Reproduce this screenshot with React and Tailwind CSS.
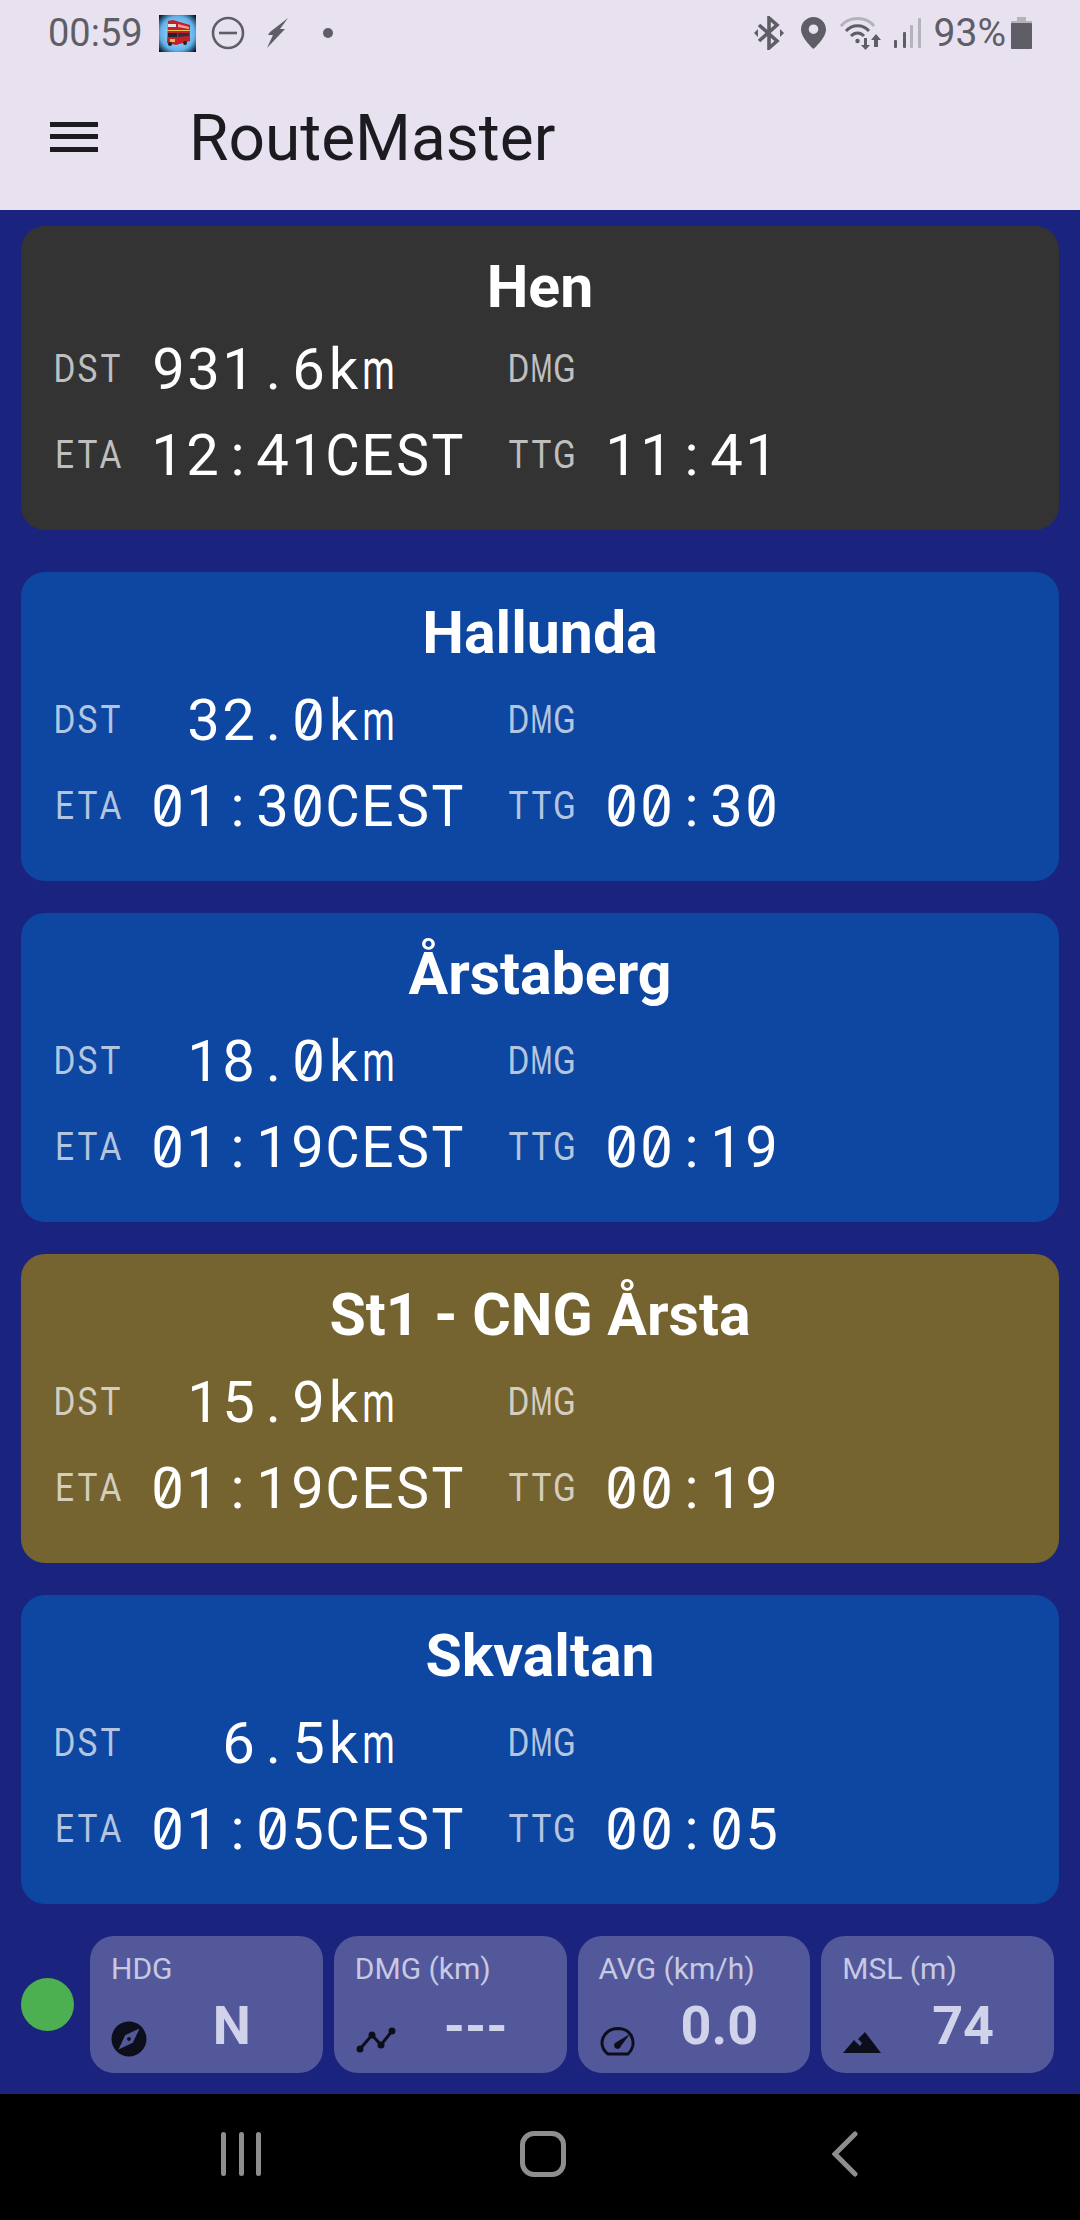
import React from 'react'

const roboto = "font-['Roboto',sans-serif]"

const stops = [
  { name: 'Hen', dst: '931.6km', eta: '12:41CEST', ttg: '11:41', bg: 'bg-[#333333]', first: true },
  { name: 'Hallunda', dst: '32.0km', eta: '01:30CEST', ttg: '00:30', bg: 'bg-[#0d47a1]' },
  { name: 'Årstaberg', dst: '18.0km', eta: '01:19CEST', ttg: '00:19', bg: 'bg-[#0d47a1]' },
  { name: 'St1 - CNG Årsta', dst: '15.9km', eta: '01:19CEST', ttg: '00:19', bg: 'bg-[#756330]' },
  { name: 'Skvaltan', dst: '6.5km', eta: '01:05CEST', ttg: '00:05', bg: 'bg-[#0d47a1]' },
]

// no Roboto Mono on the box, so each char sits in a fixed width cell
const labelScale = { M: 'scale-x-[.66]' }
const valueScale = {
  m: 'scale-x-[.64]',
  C: 'scale-x-[.9]',
  S: 'scale-x-[.95]',
  T: 'scale-x-[.92]',
  E: 'scale-x-[.98]',
}

const Label = ({ children }) => (
  <span className={`${roboto} -ml-[1px] text-[38px] leading-none text-white/70`}>
    {children.split('').map((c, i) => (
      <span key={i} className={`inline-flex w-[23px] justify-center ${labelScale[c] || 'scale-x-[.88]'}`}>{c}</span>
    ))}
  </span>
)

const Value = ({ children, className = '' }) => (
  <span className={`${roboto} -ml-[1px] text-[58px] leading-none text-white ${className}`}>
    {children.split('').map((c, i) => (
      <span
        key={i}
        className={`relative inline-flex w-[35px] justify-center ${valueScale[c] || ''} ${c === '0' ? "after:absolute after:left-[16px] after:top-[13px] after:h-[30px] after:w-[3.500px] after:rotate-[25deg] after:bg-white after:content-['']" : ''}`}
      >
        {c}
      </span>
    ))}
  </span>
)

const StopCard = ({ stop }) => (
  <div className={`${stop.bg} rounded-[24px] px-[33px] pt-[22px] ${stop.first ? 'mb-[42px]' : 'mb-[32px] last:mb-0'}`}>
    <div className={`${roboto} h-[78px] flex items-center justify-center text-[59px] font-bold text-white ${stop.first ? '' : 'mb-[5px]'}`}>
      {stop.name}
    </div>
    <div className="grid grid-cols-[97px_357px_97px_1fr] grid-rows-[86px_86px] items-center pb-[32px]">
      <Label>DST</Label>
      <Value className="pr-[112px] text-right">{stop.dst}</Value>
      <Label>DMG</Label>
      <span />
      <Label>ETA</Label>
      <Value>{stop.eta}</Value>
      <Label>TTG</Label>
      <Value>{stop.ttg}</Value>
    </div>
  </div>
)

const Bus = () => (
  <svg width="37" height="37" viewBox="0 0 37 37" className="ml-[16px]">
    <defs>
      <radialGradient id="glow" cx="50%" cy="50%" r="68%">
        <stop offset="0%" stopColor="#cfeafc" />
        <stop offset="68%" stopColor="#5fb0ea" />
        <stop offset="100%" stopColor="#04101f" />
      </radialGradient>
    </defs>
    <rect width="37" height="37" fill="url(#glow)" />
    <path d="M9 6 L14 5 L31 10 L31 26 L17 30 L8 28 Z" fill="#c4202a" />
    <rect x="9" y="9" width="8" height="3" fill="#e7e7e7" />
    <path d="M19 9 L30 12 V14 L19 12 Z" fill="#e9a0a0" />
    <rect x="9" y="18" width="9" height="4" fill="#20222e" />
    <path d="M19 18 L30 18 V21 L19 22 Z" fill="#3a2a3e" />
    <rect x="8" y="15" width="23" height="1" fill="#e8c64a" />
    <rect x="11" y="24" width="5" height="3" fill="#d9c05a" />
    <circle cx="11" cy="29" r="2" fill="#222" />
    <circle cx="26" cy="28" r="2" fill="#222" />
  </svg>
)

const DndIcon = () => (
  <svg width="34" height="34" viewBox="0 0 34 34" className="ml-[15px]" fill="none" stroke="#5f5d65" strokeWidth="2.600">
    <circle cx="17" cy="17" r="15" />
    <path d="M8 17h18" />
  </svg>
)

const BoltIcon = () => (
  <svg width="22" height="30" viewBox="0 0 22 30" className="ml-[22px]" fill="#5f5d65">
    <path d="M21 0 L13 11 L18 11 L0 30 L6 17 L1 17 L3 14 Z" />
  </svg>
)

const BluetoothIcon = () => (
  <svg width="30" height="34" viewBox="0 0 30 34" fill="none" stroke="#5f5d65" strokeWidth="3.600">
    <path d="M5 9 L23 25 L15 32 L15 2 L23 9 L5 25" />
    <path d="M0 17 L4 13 V21 Z M30 17 L26 13 V21 Z" fill="#5f5d65" stroke="none" />
  </svg>
)

const PinIcon = () => (
  <svg width="25" height="32" viewBox="0 0 25 32" className="ml-[17px]">
    <path fillRule="evenodd" fill="#5f5d65" d="M12.500 0C5.600 0 0 5.600 0 12.500 0 21 12.500 32 12.500 32S25 21 25 12.500C25 5.600 19.400 0 12.500 0Zm0 17a4.800 4.800 0 1 1 0-9.600 4.800 4.800 0 0 1 0 9.600Z" />
  </svg>
)

const WifiIcon = () => (
  <svg width="42" height="34" viewBox="0 0 42 34" className="ml-[14px]" fill="none">
    <path d="M1 10 C9 0 26 0 34 10" stroke="#b6b2bc" strokeWidth="3" />
    <path d="M6 15 C12 8 23 8 29 15" stroke="#5f5d65" strokeWidth="3" />
    <path d="M11 20 C15 16 20 16 24 20" stroke="#5f5d65" strokeWidth="3" />
    <circle cx="17.500" cy="25" r="2.200" fill="#5f5d65" />
    <path d="M24 22h3v7h3l-4.500 5-4.500-5h3Z" fill="#5f5d65" />
    <path d="M36 18l5 6h-3v7h-4v-7h-3Z" fill="#5f5d65" />
  </svg>
)

const SignalIcon = () => (
  <svg width="27" height="30" viewBox="0 0 27 30" className="ml-[12px]">
    <rect x="0" y="22" width="3" height="8" rx="1" fill="#5f5d65" />
    <rect x="9" y="14" width="3" height="16" rx="1" fill="#5f5d65" />
    <rect x="16" y="7" width="3" height="23" rx="1" fill="#b6b2bc" />
    <rect x="24" y="0" width="3" height="30" rx="1" fill="#b6b2bc" />
  </svg>
)

const BatteryIcon = () => (
  <svg width="21" height="32" viewBox="0 0 21 32" className="ml-[5px]">
    <path d="M6 0h9v4h6v28H0V4h6Z" fill="#b6b2bc" />
    <rect x="0" y="6" width="21" height="26" rx="1" fill="#5f5d65" />
  </svg>
)

const StatusBar = () => (
  <div className={`${roboto} h-[70px] flex items-center pl-[48px] pr-[48px] pb-[4px] text-[#5f5d65]`}>
    <span className="text-[38px] leading-none">00:59</span>
    <Bus />
    <DndIcon />
    <BoltIcon />
    <span className="ml-[34px] h-[10px] w-[10px] rounded-full bg-[#5f5d65]" />
    <span className="flex-1" />
    <BluetoothIcon />
    <PinIcon />
    <WifiIcon />
    <SignalIcon />
    <span className="ml-[13px] text-[39px] leading-none">93%</span>
    <BatteryIcon />
  </div>
)

const AppBar = () => (
  <div className="h-[140px] flex items-center pb-[3px]">
    <div className="ml-[50px] mb-[4px] w-[48px] flex flex-col gap-[7.500px]">
      <span className="h-[5px] bg-[#1c1b1f]" />
      <span className="h-[5px] bg-[#1c1b1f]" />
      <span className="h-[5px] bg-[#1c1b1f]" />
    </div>
    <span className={`${roboto} ml-[91px] text-[64px] leading-none text-[#1c1b1f]`}>RouteMaster</span>
  </div>
)

const CompassIcon = () => (
  <svg width="42" height="42" viewBox="0 0 24 24" fill="#0c0e1c" className="-ml-[4px] mb-[3px]">
    <path d="M12 10.900c-.61 0-1.100.49-1.100 1.100s.49 1.100 1.100 1.100c.61 0 1.100-.49 1.100-1.100s-.49-1.100-1.100-1.100zM12 2C6.480 2 2 6.480 2 12s4.480 10 10 10 10-4.480 10-10S17.520 2 12 2zm2.190 12.190L6 18l3.810-8.190L18 6l-3.810 8.190z" />
  </svg>
)

const TimelineIcon = () => (
  <svg width="42" height="30" viewBox="0 0 42 30" fill="none" className="mb-[8px]">
    <path d="M4 24 L16 10 L25 20 L36 6" stroke="#0c0e1c" strokeWidth="3" />
    <circle cx="4" cy="24" r="3.500" fill="#0c0e1c" />
    <circle cx="16" cy="10" r="3.500" fill="#0c0e1c" />
    <circle cx="25" cy="20" r="3.500" fill="#0c0e1c" />
    <circle cx="36" cy="6" r="3.500" fill="#0c0e1c" />
  </svg>
)

const SpeedIcon = () => (
  <svg width="36" height="30" viewBox="0 0 36 30" fill="none" className="mb-[7px]">
    <path d="M8 28 H28 C37 20 34 3 18 2.500 C8 2.500 2 10 2 17 C2 22 4 25 8 28Z" stroke="#0c0e1c" strokeWidth="3" />
    <path d="M30 8 L21 20 A3.500 3.500 0 1 1 15 17 Z" fill="#0c0e1c" />
  </svg>
)

const TerrainIcon = () => (
  <svg width="38" height="22" viewBox="0 0 38 22" fill="#0c0e1c" className="mb-[9px]">
    <path d="M22 0 L38 21 H0 L11 8 L17 14 L19 11 L15 7 Z" />
  </svg>
)

const tiles = [
  { label: 'HDG', value: 'N', icon: <CompassIcon /> },
  { label: 'DMG (km)', value: '---', icon: <TimelineIcon /> },
  { label: 'AVG (km/h)', value: '0.0', icon: <SpeedIcon /> },
  { label: 'MSL (m)', value: '74', icon: <TerrainIcon /> },
]

const Tile = ({ tile }) => (
  <div className={`${roboto} flex-1 h-[137px] rounded-[24px] bg-[#53589a] pl-[21px] pr-[22px] pt-[13px] flex flex-col`}>
    <span className="text-[30px] leading-[40px] text-[#c7c9e3]">{tile.label}</span>
    <div className="mt-[10px] flex items-start">
      <span className="ml-[1px] w-[51px] h-[64px] flex items-end">{tile.icon}</span>
      <span className="flex-1 text-center text-[54px] leading-[54px] font-bold text-[#d0d3ea]">{tile.value}</span>
    </div>
  </div>
)

const BottomStats = () => (
  <div className="h-[190px] flex items-start pl-[21px] pr-[26px] pt-[32px]">
    <span className="mt-[42px] h-[53px] w-[53px] shrink-0 rounded-full bg-[#4caf50]" />
    <div className="ml-[16px] flex-1 flex gap-[11px]">
      {tiles.map((tile) => (
        <Tile key={tile.label} tile={tile} />
      ))}
    </div>
  </div>
)

const NavBar = () => (
  <div className="h-[126px] bg-black flex items-center relative">
    <div className="ml-[221px] flex gap-[12.500px] pb-[6px]">
      <span className="h-[44px] w-[5px] rounded-full bg-[#8e8e8e]" />
      <span className="h-[44px] w-[5px] rounded-full bg-[#8e8e8e]" />
      <span className="h-[44px] w-[5px] rounded-full bg-[#8e8e8e]" />
    </div>
    <span className="ml-[259px] mb-[6px] h-[46px] w-[46px] rounded-[14px] border-[5px] border-[#8e8e8e]" />
    <svg width="26" height="46" viewBox="0 0 26 46" className="ml-[266px] mb-[6px]" fill="none" stroke="#8e8e8e" strokeWidth="5" strokeLinecap="round">
      <path d="M23 3 L3 23 L23 43" />
    </svg>
  </div>
)

const App = () => {
  return (
    <div className="w-[1080px] h-[2220px] flex flex-col bg-[#1a237e] overflow-hidden">
      <div className="bg-[#e8e2f0]">
        <StatusBar />
        <AppBar />
      </div>
      <div className="flex-1 px-[21px] pt-[16px]">
        {stops.map((stop) => (
          <StopCard key={stop.name} stop={stop} />
        ))}
      </div>
      <BottomStats />
      <NavBar />
    </div>
  )
}

export default App
